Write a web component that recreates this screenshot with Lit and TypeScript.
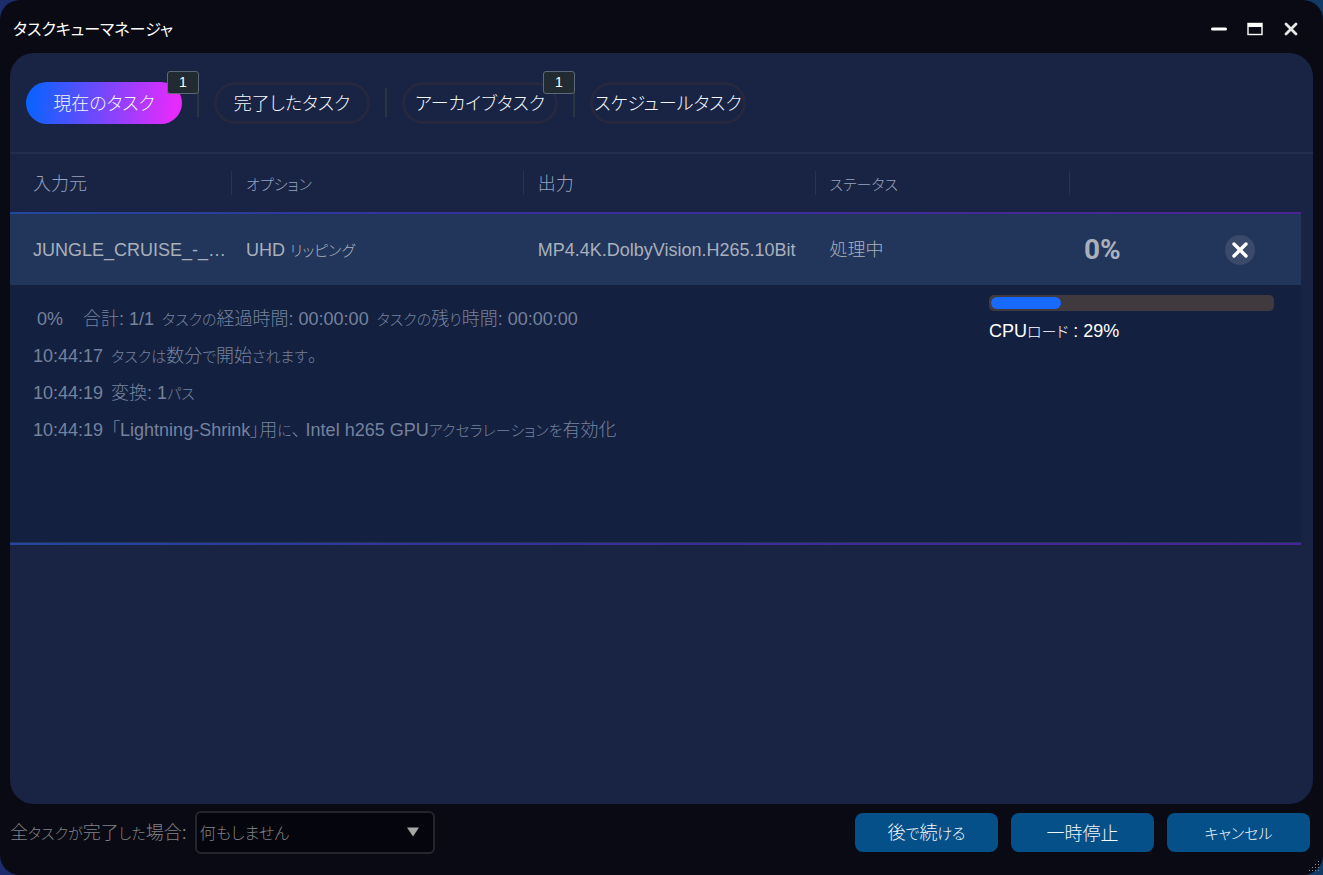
import { LitElement, html, css, svg, nothing } from "lit";
import { customElement, property, state } from "lit/decorators.js";
import { classMap } from "lit/directives/class-map.js";

interface Tab {
  id: string;
  label: string;
  badge?: number;
}

const TABS: Tab[] = [
  { id: "current", label: "現在のタスク", badge: 1 },
  { id: "done", label: "完了したタスク" },
  { id: "archive", label: "アーカイブタスク", badge: 1 },
  { id: "schedule", label: "スケジュールタスク" },
];

const LOG: [string, string][] = [
  ["10:44:17", "タスクは数分で開始されます。"],
  ["10:44:19", "変換: 1パス"],
  ["10:44:19", "「Lightning-Shrink」用に、 Intel h265 GPUアクセラレーションを有効化"],
];

const GRIP_DOTS: [number, number][] = [];
for (let row = 0; row < 4; row++) {
  for (let col = 3 - row; col < 4; col++) GRIP_DOTS.push([col * 3, row * 3]);
}

// Kana are set smaller than kanji and Latin, as in a UI gothic face.
const kanaStyle = css`
  .kana { font-size: 15px; }
`;
const mixed = (text: string) =>
  text
    .split(/([\u3040-\u30ff]+)/)
    .filter(Boolean)
    .map((part) => (/^[\u3040-\u30ff]/.test(part) ? html`<span class="kana">${part}</span>` : part));

@customElement("task-tabs")
class TaskTabs extends LitElement {
  @state() private active = "current";

  static styles = css`
    .tabs {
      display: flex;
      align-items: center;
      gap: 15px;
      height: 99px;
      padding: 0 16px;
      border-bottom: 2px solid #222e4d;
    }
    .divider {
      width: 2px;
      height: 29px;
      background: #2a3543;
    }
    .tab {
      position: relative;
      box-sizing: border-box;
      width: 156px;
      height: 42px;
      padding: 2px 0 0;
      border: 3px solid #25283f;
      border-radius: 21px;
      background: none;
      color: #f4f7ff;
      font: inherit;
      font-size: 18px;
      line-height: 24px;
      white-space: nowrap;
    }
    .tab.active {
      border: 0;
      background: linear-gradient(97deg, #0b62ff 4%, #7448fb 48%, #e52bfd 94%);
    }
    .badge {
      position: absolute;
      top: -11px;
      right: -17px;
      box-sizing: border-box;
      width: 32px;
      height: 23px;
      border: 1px solid #5b6878;
      border-radius: 3px;
      background: #222b32;
      color: #fff;
      font-size: 14px;
      line-height: 21px;
      text-align: center;
    }
    .tab:not(.active) .badge {
      top: -14px;
      right: -20px;
    }
  `;

  render() {
    return html`<nav class="tabs">
      ${TABS.map(
        (t, i) => html`
          ${i ? html`<span class="divider"></span>` : nothing}
          <button
            class=${classMap({ tab: true, active: t.id === this.active })}
            @click=${() => (this.active = t.id)}
          >
            ${t.label}${t.badge ? html`<span class="badge">${t.badge}</span>` : nothing}
          </button>
        `
      )}
    </nav>`;
  }
}

@customElement("task-table")
class TaskTable extends LitElement {
  @property({ type: Number }) cpu = 29;

  static styles = [kanaStyle, css`
    :host {
      display: block;
      padding-right: 12px;
    }
    table {
      width: 100%;
      border-collapse: collapse;
      table-layout: fixed;
      font-size: 18px;
      line-height: 24px;
    }
    .c1 { width: 17.2%; }
    .c2, .c3 { width: 22.6%; }
    .c4 { width: 19.7%; }
    th, td {
      padding: 0;
      text-align: left;
      font-weight: inherit;
      white-space: nowrap;
    }
    th {
      height: 58px;
      color: #95a1bd;
    }
    .head {
      box-sizing: border-box;
      height: 24px;
      padding: 1px 0 0 14px;
      border-right: 1px solid #28354a;
    }
    th:last-child .head { border: 0; }
    th:first-child .head, .row td:first-child { padding-left: 23px; }
    .rule td {
      height: 2px;
      background: linear-gradient(90deg, #23479f, #35309a 35%, #4a2496);
    }
    .rule.end td { border-top: 1px solid #22365c; }
    .row td {
      box-sizing: border-box;
      height: 71px;
      padding: 1px 0 0 14px;
      overflow: hidden;
      text-overflow: ellipsis;
      background: #22365c;
      color: #a9b0bb;
    }
    .row td:last-child { padding-top: 0; }
    .state {
      display: flex;
      align-items: center;
      justify-content: space-between;
      padding-right: 46px;
    }
    .percent {
      font-family: Roboto, "Liberation Sans", sans-serif;
      font-size: 28px;
      font-weight: 700;
    }
    .remove {
      display: flex;
      width: 30px;
      height: 30px;
      padding: 0;
      border: 0;
      border-radius: 50%;
      background: #3b4a6b;
    }
    .details {
      display: flex;
      justify-content: space-between;
      box-sizing: border-box;
      height: 257px;
      padding: 10px 27px 0 23px;
      background: #14203f;
    }
    .log {
      margin: 0;
      padding: 6px 0 0;
      list-style: none;
      line-height: 37px;
      color: #75829e;
    }
    .log li {
      display: flex;
      gap: 8px;
    }
    .log .total {
      padding-left: 4px;
    }
    .done { margin-right: 12px; }
    .load {
      flex: 0 0 285px;
      color: #fff;
    }
    progress {
      display: block;
      box-sizing: border-box;
      width: 100%;
      height: 16px;
      padding: 2px;
      border: 0;
      border-radius: 5px;
      appearance: none;
      background: #403a3e;
    }
    progress::-webkit-progress-bar { background: none; }
    progress::-webkit-progress-value {
      border-radius: 6px;
      background: #1869fd;
    }
    .load label {
      display: block;
      margin-top: 8px;
    }
  `];

  render() {
    return html`<table>
      <colgroup><col class="c1" /><col class="c2" /><col class="c3" /><col class="c4" /><col /></colgroup>
      <thead>
        <tr>
          ${["入力元", "オプション", "出力", "ステータス", ""].map(
            (h) => html`<th><div class="head">${mixed(h)}</div></th>`
          )}
        </tr>
      </thead>
      <tbody>
        <tr class="rule"><td colspan="5"></td></tr>
        <tr class="row">
          <td>JUNGLE_CRUISE_-_…</td>
          <td>${mixed("UHD リッピング")}</td>
          <td>MP4.4K.DolbyVision.H265.10Bit</td>
          <td>処理中</td>
          <td>
            <div class="state">
              <span class="percent">0%</span>
              <button class="remove" aria-label="削除">
                <svg width="30" height="30" viewBox="0 0 30 30">
                  <path d="M9 9 21 21M21 9 9 21" stroke="#fff" stroke-width="3.4" stroke-linecap="round" />
                </svg>
              </button>
            </div>
          </td>
        </tr>
        <tr>
          <td colspan="5">
            <div class="details">
              <ul class="log">
                <li class="total">
                  <span class="done">0%</span>
                  ${["合計: 1/1", "タスクの経過時間: 00:00:00", "タスクの残り時間: 00:00:00"].map(
                    (s) => html`<div>${mixed(s)}</div>`
                  )}
                </li>
                ${LOG.map(([time, text]) => html`<li><span>${time}</span><div>${mixed(text)}</div></li>`)}
              </ul>
              <div class="load">
                <progress id="cpu" max="100" value="25"></progress>
                <label for="cpu">${mixed("CPUロード")} : ${this.cpu}%</label>
              </div>
            </div>
          </td>
        </tr>
        <tr class="rule end"><td colspan="5"></td></tr>
      </tbody>
    </table>`;
  }
}

@customElement("app-root")
class AppRoot extends LitElement {
  static styles = [kanaStyle, css`
    :host {
      display: block;
      background: linear-gradient(90deg, #1c2c6c, #101d45 50%, #123a66);
      color: #fff;
      font-family: "Liberation Sans", "Noto Sans CJK JP", sans-serif;
      font-weight: 300;
      font-feature-settings: "palt";
    }
    .window {
      position: relative;
      display: flex;
      flex-direction: column;
      box-sizing: border-box;
      min-height: 100vh;
      padding: 0 10px;
      border-radius: 20px;
      background: #0a0a14;
    }
    .titlebar {
      display: flex;
      align-items: center;
      justify-content: space-between;
      box-sizing: border-box;
      height: 53px;
      padding: 5px 4px 0 3px;
    }
    h1 {
      margin: 0;
      padding-top: 2px;
      font-size: 16px;
      font-weight: 400;
      line-height: 24px;
    }
    .controls { display: flex; }
    .control {
      display: flex;
      align-items: center;
      justify-content: center;
      width: 36px;
      height: 32px;
      padding: 0;
      border: 0;
      background: none;
    }
    .panel {
      flex: 1;
      border-radius: 24px;
      background: #192444;
      overflow: hidden;
    }
    .footer {
      display: flex;
      align-items: center;
      gap: 13px;
      height: 57px;
      padding: 0 3px 14px 0;
      color: #818186;
      font-size: 18px;
      line-height: 24px;
    }
    .after {
      display: flex;
      align-items: center;
      gap: 8px;
      margin-right: auto;
    }
    .after label { padding-top: 2px; }
    .picker { position: relative; }
    select {
      display: block;
      box-sizing: border-box;
      width: 240px;
      height: 43px;
      padding: 2px 3px 0;
      border: 2px solid #25252e;
      border-radius: 6px;
      appearance: none;
      background: #05050d;
      color: #818186;
      font: inherit;
      font-size: 16px;
      font-feature-settings: inherit;
    }
    .arrow {
      position: absolute;
      top: 16px;
      right: 15px;
      pointer-events: none;
    }
    .action {
      width: 143px;
      height: 39px;
      padding: 2px 0 0;
      border: 0;
      border-radius: 8px;
      background: #055089;
      color: #eef8ff;
      font: inherit;
      font-feature-settings: inherit;
    }
    .grip {
      position: absolute;
      right: 4px;
      bottom: 4px;
    }
  `];

  render() {
    return html`<div class="window">
      <header class="titlebar">
        <h1>タスクキューマネージャ</h1>
        <div class="controls">
          <button class="control" aria-label="最小化">
            <svg width="16" height="16" viewBox="0 0 16 16"><path d="M1.5 8h13" stroke="#fff" stroke-width="3" stroke-linecap="round" /></svg>
          </button>
          <button class="control" aria-label="最大化">
            <svg width="16" height="16" viewBox="0 0 16 16">
              <rect x="1" y="2.5" width="14" height="11" fill="none" stroke="#fff" stroke-width="1.4" />
              <rect x="1" y="2" width="14" height="4" fill="#fff" />
            </svg>
          </button>
          <button class="control" aria-label="閉じる">
            <svg width="16" height="16" viewBox="0 0 16 16"><path d="m3 3 10 10M13 3 3 13" stroke="#e6e6e6" stroke-width="2.8" stroke-linecap="round" /></svg>
          </button>
        </div>
      </header>
      <main class="panel">
        <task-tabs></task-tabs>
        <task-table></task-table>
      </main>
      <footer class="footer">
        <div class="after">
          <label for="after">${mixed("全タスクが完了した場合:")}</label>
          <div class="picker">
            <select id="after"><option>何もしません</option></select>
            <svg class="arrow" width="14" height="10" viewBox="0 0 14 10"><path d="M1 0.5h12L7 9.5z" fill="#a6a6a6" /></svg>
          </div>
        </div>
        <button class="action">${mixed("後で続ける")}</button>
        <button class="action">一時停止</button>
        <button class="action">${mixed("キャンセル")}</button>
      </footer>
      <svg class="grip" width="10" height="10" viewBox="0 0 10 10">
        ${GRIP_DOTS.map(([x, y]) => svg`<rect x=${x} y=${y} width="1" height="1" fill="#8b8b92" />`)}
      </svg>
    </div>`;
  }
}
